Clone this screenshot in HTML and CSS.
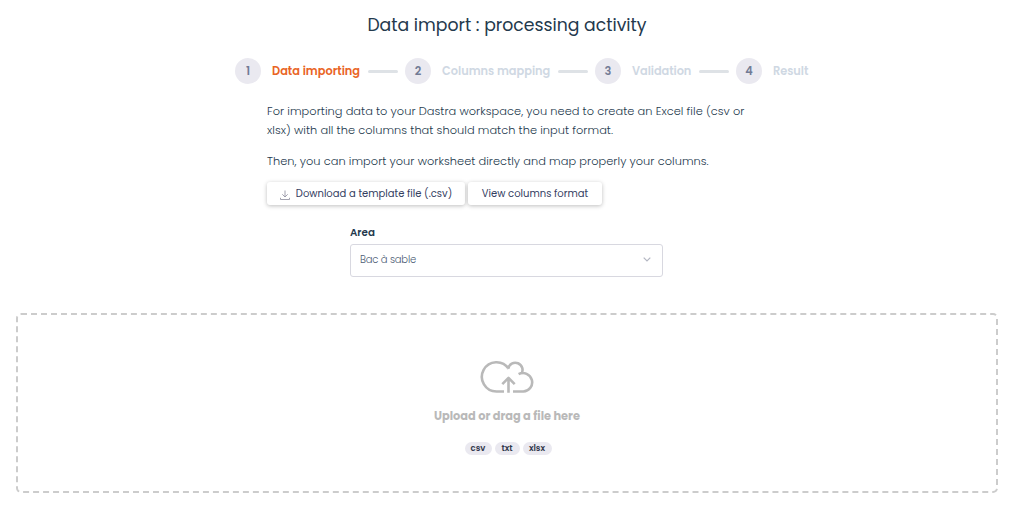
FILE: index.html
```
<!DOCTYPE html>
<html lang="en">
<head>
<meta charset="utf-8">
<title>Data import</title>
<link rel="stylesheet" href="styles.css">
</head>
<body>
<main class="page">
  <h1 class="title"><span>Data import : processing activity</span></h1>
  <ol class="steps">
    <li class="step step-import active"><span class="num">1</span><span class="label">Data importing</span><i class="line"></i></li>
    <li class="step step-map"><span class="num">2</span><span class="label">Columns mapping</span><i class="line"></i></li>
    <li class="step step-valid"><span class="num">3</span><span class="label">Validation</span><i class="line"></i></li>
    <li class="step step-result"><span class="num">4</span><span class="label">Result</span></li>
  </ol>
  <section class="intro">
    <p>For importing data to your Dastra workspace, you need to create an Excel file (csv or<br>xlsx) with all the columns that should match the input format.</p>
    <p>Then, you can import your worksheet directly and map properly your columns.</p>
    <div class="actions">
      <button class="btn btn-download"><svg class="dl" viewBox="0 0 10 10"><path d="M5 .5v6.3M2.3 4.3 5 7l2.7-2.7M.5 7.8v1.7h9V7.8"/></svg><span>Download a template file (.csv)</span></button>
      <button class="btn btn-view"><span>View columns format</span></button>
    </div>
  </section>
  <section class="field">
    <label class="field-label">Area</label>
    <div class="select"><span>Bac à sable</span><svg class="chev" viewBox="0 0 8 5"><path d="M.7.7 4 4 7.3.7"/></svg></div>
  </section>
  <section class="drop">
    <svg class="cloud" viewBox="0 0.7 54 33"><path d="M24 31.2H16.5A14.6 14.6 0 1 1 28.7 8.6M28.2 8.6A7.2 7.2 0 1 1 41.2 13.8M38.6 13.9A9.2 9.2 0 1 1 43.3 31.2H33M28.5 32.5V18M22.3 23.8l6.2-6.2 6.2 6.2"/></svg>
    <div class="drop-text">Upload or drag a file here</div>
    <div class="tags"><span class="tag tag-csv">csv</span><span class="tag tag-txt">txt</span><span class="tag tag-xlsx">xlsx</span></div>
  </section>
</main>
</body>
</html>
```
FILE: styles.css
```
* { box-sizing: border-box; }
body { margin: 0; background: #fff; color: #24394d; font-family: Poppins, Inter, sans-serif; font-size: 11.375px; }
.page { height: 505px; padding: 12px 17px 12px 16px; display: flex; flex-direction: column; overflow: hidden; }
.title { margin: 0; height: 26px; line-height: 26px; font-size: 17.25px; font-weight: 400; text-align: center; white-space: nowrap; }
.steps { list-style: none; margin: 20px 0 0 219px; padding: 0; display: flex; height: 26px; }
.step { display: flex; align-items: center; color: #cfd8e3; font-weight: 600; white-space: nowrap; }
.step-import { width: 170px; }
.step-map { width: 190px; }
.step-valid { width: 141px; }
.step-valid .label, .step-result .label { letter-spacing: -.05px; }
.num { width: 26px; height: 26px; border-radius: 50%; background: #eae9f0; color: #727b95; line-height: 26px; text-align: center; margin-right: 11px; flex: none; }
.active .label { color: #e96424; }
.line { width: 30px; height: 3px; border-radius: 2px; background: #dee2e6; margin-left: auto; margin-right: 7px; }
.intro { margin: 18px 0 0 251px; width: 490px; line-height: 19px; }
.intro p { margin: 0 0 12px; font-weight: 300; letter-spacing: .045px; white-space: nowrap; }
.actions { display: flex; gap: 3px; margin-top: -1px; }
.btn { height: 23px; border: 0; border-radius: 3px; background: #fff; box-shadow: 0 1px 4px rgba(0,0,0,.26); font: 400 10px/23px Poppins, Inter, sans-serif; color: #34405f; padding: 0; display: flex; align-items: center; justify-content: center; white-space: nowrap; }
.btn-download { width: 198px; gap: 6px; }
.btn-view { width: 134px; }
.dl { width: 10px; height: 10px; fill: none; stroke: #8c8c9c; stroke-width: .8; position: relative; top: 1px; }
.field { margin: 20px 0 0 334px; width: 313px; }
.field-label { display: block; height: 15px; line-height: 15px; font-size: 10.3px; font-weight: 600; }
.select { margin-top: 4px; height: 33px; border: 1px solid #d8d8e0; border-radius: 3px; padding: 0 11px 2px 9px; display: flex; align-items: center; justify-content: space-between; color: #4b5b73; font-size: 10px; letter-spacing: -.2px; font-weight: 300; }
.chev { width: 8px; height: 5px; fill: none; stroke: #b3b6c2; stroke-width: 1.2; }
.drop { margin-top: 36px; height: 180px; border: 2px dashed #ccc; border-radius: 5px; display: flex; flex-direction: column; align-items: center; padding-top: 46px; }
.cloud { width: 54px; height: 33px; fill: none; stroke: #b9b9b9; stroke-width: 2.6; stroke-linejoin: round; overflow: visible; }
.drop-text { margin-top: 13px; height: 18px; line-height: 18px; color: #b9b9b9; font-weight: 700; white-space: nowrap; }
.tags { display: flex; gap: 3px; margin-top: 17px; margin-left: 2px; }
.tag { height: 13px; line-height: 13px; border-radius: 7px; background: #eae9f0; color: #34394d; font-size: 8.5px; font-weight: 600; text-align: center; }
.tag-csv { width: 27px; }
.tag-txt { width: 25px; }
.tag-xlsx { width: 29px; }
```
